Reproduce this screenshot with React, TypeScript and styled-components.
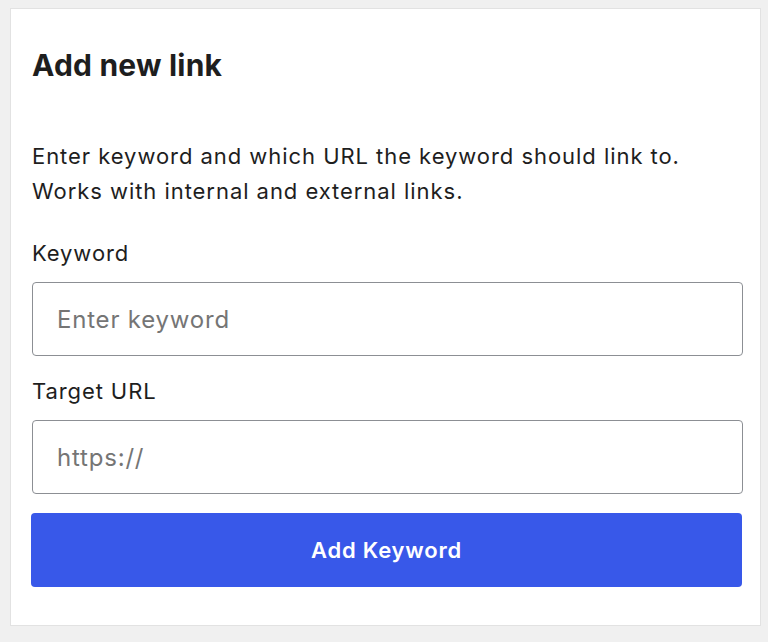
import React from "react";
import styled, { createGlobalStyle } from "styled-components";

const GlobalStyle = createGlobalStyle`
  html, body {
    margin: 0;
    padding: 0;
    background: #f0f0f0;
    font-family: Inter, "Liberation Sans", Arial, sans-serif;
  }
`;

const Page = styled.div`
  padding: 8px 7px 16px 10px;
`;

const Card = styled.div`
  background: #ffffff;
  border: 1px solid #e2e2e2;
  padding: 0 18px 38px 21px;
  box-sizing: border-box;
  height: 618px;
`;

const Title = styled.h2`
  margin: 0;
  padding-top: 36px;
  font-size: 30px;
  line-height: 40px;
  font-weight: 700;
  letter-spacing: 0.2px;
  color: #1e1e1e;
`;

const Description = styled.p`
  margin: 54px 0 0 0;
  font-size: 22px;
  line-height: 35px;
  letter-spacing: 0.95px;
  color: #1e1e1e;
`;

const Field = styled.div`
  display: flex;
  flex-direction: column;
  margin-top: ${(p: { $top: number }) => p.$top}px;
`;

const Label = styled.label`
  font-size: 22px;
  line-height: 30px;
  letter-spacing: 0.9px;
  color: #1e1e1e;
  margin-bottom: 14px;
`;

const Input = styled.input`
  box-sizing: border-box;
  width: 711px;
  height: 74px;
  border: 1.5px solid #8c8f94;
  border-radius: 4px;
  padding: 0 24px;
  font-family: Inter, "Liberation Sans", Arial, sans-serif;
  font-size: 24px;
  letter-spacing: 0.8px;
  color: #757575;
  background: #fff;
  outline: none;
  &::placeholder {
    color: #757575;
  }
`;

const Button = styled.button`
  display: block;
  box-sizing: border-box;
  width: 711px;
  height: 74px;
  margin: 19px 0 0 -1px;
  border: none;
  border-radius: 4px;
  background: #3858e9;
  color: #ffffff;
  font-family: Inter, "Liberation Sans", Arial, sans-serif;
  font-size: 22px;
  font-weight: 600;
  letter-spacing: 0.8px;
  cursor: pointer;
`;

export default function App() {
  return (
    <>
      <GlobalStyle />
      <Page>
        <Card>
          <Title>Add new link</Title>
          <Description>
            Enter keyword and which URL the keyword should link to.
            <br />
            Works with internal and external links.
          </Description>
          <Field $top={29}>
            <Label>Keyword</Label>
            <Input placeholder="Enter keyword" />
          </Field>
          <Field $top={20}>
            <Label>Target URL</Label>
            <Input defaultValue="https://" />
          </Field>
          <Button>Add Keyword</Button>
        </Card>
      </Page>
    </>
  );
}
